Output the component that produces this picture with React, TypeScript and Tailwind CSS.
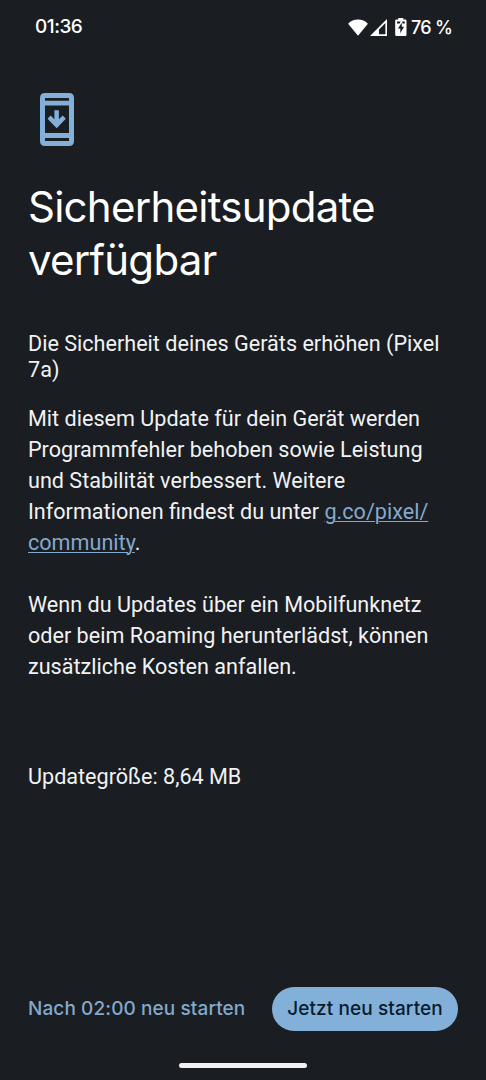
import React from 'react';

function WifiIcon() {
  return (
    <svg className="block h-[17px] w-5" viewBox="0 0 20 17" fill="#fff">
      <path d="M10 16.7 0.1 4.7C2.8 2.1 6.2 0.6 10 0.6s7.2 1.5 9.9 4.1Z" />
    </svg>
  );
}

function SignalIcon() {
  return (
    <svg className="block h-[17px] w-[17px]" viewBox="0 0 17 17" fill="#fff" fillRule="evenodd">
      <path d="M0 17 17 0V17ZM9 15.3H15.4V4L9 10.4Z" />
    </svg>
  );
}

function BatteryIcon() {
  return (
    <svg className="block h-[18px] w-3" viewBox="0 0 12 18">
      <path fill="#fff" d="M3.3 0H8.3V1.6H10.4Q11.5 1.6 11.5 2.7V16.8Q11.5 18 10.4 18H1.3Q.2 18 .2 16.8V2.7Q.2 1.6 1.3 1.6H3.3Z" />
      <path fill="#1a1d21" d="M2 3.6H5.6L4.8 5.6H2ZM7.1 3.6H9.8V5.6H7.5ZM6.8 4.8V8.7H9L5.3 15.2V10.6H2.9Z" />
    </svg>
  );
}

function UpdateIcon() {
  return (
    <svg className="block h-[53px] w-[34px]" viewBox="0 0 34 53" fill="#83b0d9">
      <path fillRule="evenodd" d="M5 0H29Q34 0 34 5V48Q34 53 29 53H5Q0 53 0 48V5Q0 0 5 0ZM5 5V7.7H29V5ZM5 12.4V40H29V12.4ZM5 45V48H29V45Z" />
      <path d="M14.4 17.2H18.9V26.2L22.7 22.6 25.8 25.7 16.7 35.2 7.5 25.7 10.6 22.6 14.4 26.2Z" />
    </svg>
  );
}

export default function App() {
  return (
    <main className="flex h-[1080px] w-[486px] flex-col bg-[#1a1d21] font-['Roboto',sans-serif] text-[#f1f2f4]">
      <header className="flex h-[54px] items-center justify-between pr-[34px] pl-[35px] text-white">
        <time className="font-['Inter',sans-serif] text-[19px] font-medium tracking-[-0.5px] whitespace-nowrap">01:36</time>
        <div className="flex items-center">
          <WifiIcon />
          <span className="ml-[2px]"><SignalIcon /></span>
          <span className="ml-2"><BatteryIcon /></span>
          <span className="ml-1 w-[41px] font-['Inter',sans-serif] text-[18px] font-medium tracking-[-0.7px] whitespace-nowrap">76 %</span>
        </div>
      </header>
      <section className="flex flex-1 flex-col pl-7">
        <div className="pt-[39px] pl-[12px]"><UpdateIcon /></div>
        <h1 className="mt-[34px] font-['Inter',sans-serif] text-[42px] leading-[53px] font-normal tracking-[-0.75px] text-white">
          Sicherheitsupdate<br />verfügbar
        </h1>
        <p className="mt-[45px] text-[21.6px] leading-[26px] whitespace-nowrap">
          Die Sicherheit deines Geräts erhöhen (Pixel<br />7a)
        </p>
        <p className="mt-[20px] text-[21.6px] leading-[31px] whitespace-nowrap">
          Mit diesem Update für dein Gerät werden<br />
          Programmfehler behoben sowie Leistung<br />
          und Stabilität verbessert. Weitere<br />
          Informationen findest du unter{' '}
          <a className="text-[#83a9cc] underline decoration-1 underline-offset-[2px]">g.co/pixel/<br />community</a>.
        </p>
        <p className="mt-[31px] text-[21.6px] leading-[31px] whitespace-nowrap">
          Wenn du Updates über ein Mobilfunknetz<br />
          oder beim Roaming herunterlädst, können<br />
          zusätzliche Kosten anfallen.
        </p>
        <p className="mt-[79px] text-[21.6px] leading-[31px]">Updategröße: 8,64 MB</p>
      </section>
      <footer className="flex h-[93px] flex-col">
        <div className="flex h-[44px] items-center justify-between pr-7 pl-7 font-['Inter',sans-serif] text-[19px] font-medium tracking-[0.1px] whitespace-nowrap">
          <button className="text-[#83a9cc]">Nach 02:00 neu starten</button>
          <button className="h-[44px] w-[186px] rounded-full bg-[#83b0d9] text-[#081c2e]">Jetzt neu starten</button>
        </div>
        <div className="mt-[32px] ml-[179px] h-[5px] w-[128px] rounded-full bg-[#f1f0f2]" />
      </footer>
    </main>
  );
}
